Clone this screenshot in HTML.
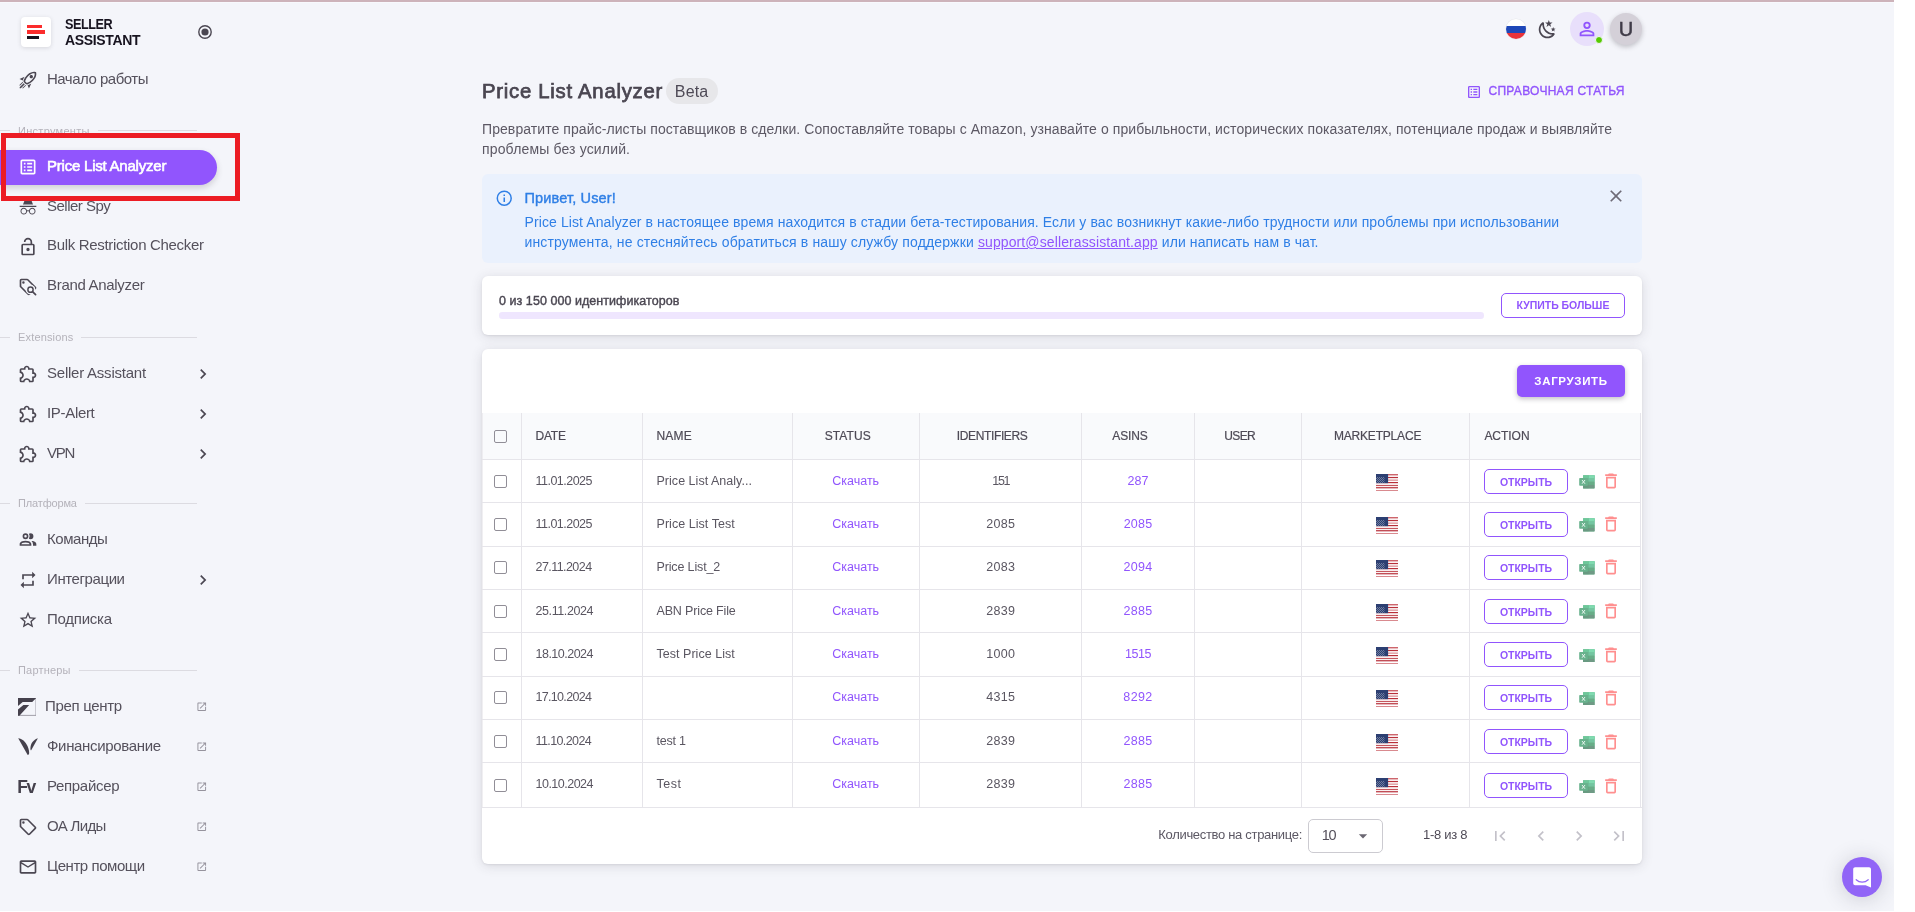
<!DOCTYPE html>
<html lang="ru">
<head>
<meta charset="utf-8">
<title>Price List Analyzer</title>
<style>
*{box-sizing:border-box;margin:0;padding:0}
html,body{width:1915px;height:912px;overflow:hidden;background:#fff}
body{font-family:"Liberation Sans",sans-serif;color:#524e59;position:relative}
#app{will-change:transform;position:absolute;left:0;top:0;width:1894px;height:911px;background:#f4f5fa;overflow:hidden}
#topbar{position:absolute;left:0;top:0;width:1894px;height:2px;background:#cdb3ba}
.abs{position:absolute}
svg{display:block}
/* ---------- sidebar ---------- */
#logo{position:absolute;left:21px;top:17px;width:30px;height:30px;background:#fff;border-radius:4px;box-shadow:0 1px 4px rgba(58,53,65,.16)}
#logo i{position:absolute;left:6px;height:3.4px;display:block}
#brand{position:absolute;left:65px;top:16px;font-weight:700;font-size:14px;line-height:16px;color:#17131f;letter-spacing:-.35px}
.nav{position:absolute;left:0;height:40px;width:240px}
.nav .ic{position:absolute;left:18px;top:11px;width:20px;height:20px}
.nav .tx{position:absolute;left:47px;top:0;line-height:40px;font-size:15px;color:#55515c;white-space:nowrap;letter-spacing:-.1px}
.nav .chev{position:absolute;left:192.8px;top:11.2px;width:20px;height:20px}
.nav .ext{position:absolute;left:196.2px;top:15.1px;width:11.5px;height:11.5px}
.sec{position:absolute;left:0;width:200px;height:14px}
.sec:before{content:"";position:absolute;left:0;top:7px;width:10px;height:1px;background:#dcdbe1}
.sec span{position:absolute;left:18px;top:0;font-size:11px;line-height:14px;color:#b4b2ba;background:#f4f5fa;padding-right:8px;z-index:1;letter-spacing:.1px}
.sec:after{content:"";position:absolute;left:18px;top:7px;width:179px;height:1px;background:#dcdbe1}
#active{position:absolute;left:0;top:150px;width:217px;height:35px;border-radius:0 18px 18px 0;background:#9155fd;box-shadow:0 3px 6px rgba(58,53,65,.2)}
#redbox{position:absolute;left:1px;top:133px;width:239px;height:68px;border:5px solid #ec1c24;z-index:5}

/* ---------- main ---------- */
.t{white-space:nowrap}
.card{background:#fff;border-radius:6px;box-shadow:0 2px 12px rgba(58,53,65,.15),0 1px 2px rgba(58,53,65,.09)}
.obtn{border:1px solid #9155fd;border-radius:5px;text-align:center;color:#9155fd;-webkit-text-stroke:.35px #9155fd;display:flex;align-items:center;justify-content:center}
.hl{height:1px;background:#e6e5ea}
.vl{width:1px;background:#e6e5ea}
.th{font-size:12px;line-height:20px;color:#4e4a56;-webkit-text-stroke:.2px #4e4a56}
.td{font-size:12.5px;line-height:20px;color:#5a5661}
.pu{color:#9155fd}
.ob{letter-spacing:0;font-weight:700;-webkit-text-stroke:0}
.cb{width:13.1px;height:13px;border:1.35px solid #918e97;border-radius:2px}
#n1{letter-spacing:-0.49px}
#n2{letter-spacing:-0.222px}
#n3{letter-spacing:-0.508px}
#n4{letter-spacing:-0.315px}
#n5{letter-spacing:-0.31px}
#n6{letter-spacing:-0.23px}
#n7{letter-spacing:-0.317px}
#n8{letter-spacing:-1.3px}
#n9{letter-spacing:-0.46px}
#n10{letter-spacing:-0.403px}
#n11{letter-spacing:-0.242px}
#n12{letter-spacing:-0.326px}
#n13{letter-spacing:-0.324px}
#n14{letter-spacing:-0.32px}
#n15{letter-spacing:-0.664px}
#n16{letter-spacing:-0.441px}
#br2{letter-spacing:-0.339px}
#s1{letter-spacing:0.281px}
#s2{letter-spacing:0.165px}
#s3{letter-spacing:-0.152px}
#s4{letter-spacing:0.178px}
#title{letter-spacing:0.743px}
#beta{letter-spacing:0.159px}
#helpart{letter-spacing:0.285px}
#desc1{letter-spacing:0.077px}
#desc2{letter-spacing:0.153px}
#al0{letter-spacing:0.154px}
#al1{letter-spacing:0.099px}
#al2a{letter-spacing:0.145px}
#al2b{letter-spacing:0.109px}
#al2c{letter-spacing:0.101px}
#cnt{letter-spacing:0.052px}
#buy{letter-spacing:-0.026px}
#upload{letter-spacing:0.654px}
#h1{letter-spacing:-0.208px}
#h2{letter-spacing:0.176px}
#h3{letter-spacing:0.067px}
#h4{letter-spacing:-0.367px}
#h5{letter-spacing:-0.129px}
#h6{letter-spacing:-0.615px}
#h7{letter-spacing:-0.186px}
#h8{letter-spacing:-0.029px}
#perpage{letter-spacing:-0.316px}
#ten{letter-spacing:-1.3px}
#range{letter-spacing:-0.296px}
#d0{letter-spacing:-0.516px}
#nm0{letter-spacing:0.025px}
#st0{letter-spacing:0.004px}
#id0{letter-spacing:-1.3px}
#as0{letter-spacing:0.07px}
#d1{letter-spacing:-0.516px}
#nm1{letter-spacing:0.044px}
#st1{letter-spacing:0.004px}
#id1{letter-spacing:0.362px}
#as1{letter-spacing:0.229px}
#d2{letter-spacing:-0.56px}
#nm2{letter-spacing:-0.138px}
#st2{letter-spacing:0.004px}
#id2{letter-spacing:0.362px}
#as2{letter-spacing:0.296px}
#d3{letter-spacing:-0.405px}
#nm3{letter-spacing:-0.152px}
#st3{letter-spacing:0.004px}
#id3{letter-spacing:0.362px}
#as3{letter-spacing:0.296px}
#d4{letter-spacing:-0.507px}
#nm4{letter-spacing:0.028px}
#st4{letter-spacing:0.004px}
#id4{letter-spacing:0.362px}
#as4{letter-spacing:-0.438px}
#d5{letter-spacing:-0.685px}
#st5{letter-spacing:0.004px}
#id5{letter-spacing:0.362px}
#as5{letter-spacing:0.362px}
#d6{letter-spacing:-0.605px}
#nm6{letter-spacing:-0.236px}
#st6{letter-spacing:0.004px}
#id6{letter-spacing:0.362px}
#as6{letter-spacing:0.296px}
#d7{letter-spacing:-0.507px}
#nm7{letter-spacing:0.487px}
#st7{letter-spacing:0.004px}
#id7{letter-spacing:0.362px}
#as7{letter-spacing:0.296px}
</style>
</head>
<body>
<div id="app">
<div id="topbar"></div><div class="abs" style="left:0;top:2px;width:1894px;height:1px;background:#f8f9fd"></div>
<svg width="0" height="0" style="position:absolute"><defs>
<pattern id="stars" width="2" height="2" patternUnits="userSpaceOnUse"><rect x=".1" y=".1" width=".8" height=".8" fill="#fff" opacity=".5"/><rect x="1.1" y="1.1" width=".8" height=".8" fill="#fff" opacity=".5"/></pattern>
<g id="usflag"><rect width="22" height="17.2" fill="#fff"/><rect y="0.17" width="22" height="1.2" fill="#c4474f"/><rect y="2.93" width="22" height="1.2" fill="#b8303a"/><rect y="5.54" width="22" height="1.2" fill="#d98a8f"/><rect y="8.00" width="22" height="1.2" fill="#b8303a"/><rect y="10.90" width="22" height="1.2" fill="#c4565d"/><rect y="13.16" width="22" height="1.2" fill="#b8303a"/><rect y="16.00" width="22" height="1.2" fill="#d98a8f"/><rect width="12.1" height="9.2" fill="#2c3f72"/><rect x="0" y="3" width="8.5" height="6.2" fill="url(#stars)"/></g>
<g id="xls"><rect x="4" y="1.2" width="11.6" height="13.2" rx=".7" fill="#6fb892"/><rect x="4" y="1.2" width="11.6" height="3.2" fill="#6ec79a"/><rect x="10" y="1.2" width="5.6" height="3.2" fill="#80dab0"/><rect x="4" y="4.4" width="11.6" height="3.3" fill="#74c5a1"/><rect x="4" y="7.7" width="11.6" height="3.3" fill="#68ad88"/><rect x="4" y="11" width="11.6" height="3.4" fill="#6f9a85"/><rect x="4" y="4.4" width="5.6" height="10" fill="#5c9b7a" opacity=".35"/><rect x=".2" y="4" width="8.7" height="7.8" rx=".8" fill="#69b28d"/><path d="M3 6L6 9.8M6 6L3 9.8" stroke="#fff" stroke-width=".95" opacity=".9"/></g>
</defs></svg>


<!-- SIDEBAR -->
<div id="logo"><i style="top:8px;width:15px;background:#fb2c2c"></i><i style="top:13.3px;width:18px;background:#fb2c2c"></i><i style="top:18.6px;width:12px;background:#17131f"></i></div>
<div id="brand"><span id="br1" style="display:inline-block;transform:scaleX(.905);transform-origin:0 50%;letter-spacing:-.5px!important">SELLER</span><br><span id="br2">ASSISTANT</span></div>
<svg class="abs" style="left:197px;top:24px" width="16" height="16" viewBox="0 0 16 16"><circle cx="8" cy="8" r="6.2" fill="none" stroke="#4b4752" stroke-width="1.4"/><circle cx="8" cy="8" r="3.6" fill="#4b4752"/></svg>

<div class="sec" style="top:123px"><span id="s1" style="top:.9px">Инструменты</span></div>
<div class="sec" style="top:330px"><span id="s2">Extensions</span></div>
<div class="sec" style="top:496px"><span id="s3">Платформа</span></div>
<div class="sec" style="top:663px"><span id="s4">Партнеры</span></div>
<div id="active"></div>
<div class="nav" style="top:59px"><svg class="ic" viewBox="0 0 24 24"><path fill="#4b4752" d="M13.13 22.19L11.5 18.36C13.07 17.78 14.54 17 15.9 16.09L13.13 22.19M5.64 12.5L1.81 10.87L7.91 8.1C7 9.46 6.22 10.93 5.64 12.5M19.22 4C19.5 4 19.75 4 19.96 4.05C20.13 5.44 19.94 8.3 16.66 11.58C14.96 13.29 12.93 14.6 10.65 15.47L8.5 13.37C9.42 11.06 10.73 9.03 12.42 7.34C15.18 4.58 17.64 4 19.22 4M19.22 2C17.24 2 14.24 2.69 11 5.93C8.81 8.12 7.5 10.53 6.65 12.64C6.37 13.39 6.56 14.21 7.11 14.77L9.24 16.89C9.62 17.27 10.13 17.5 10.66 17.5C10.89 17.5 11.13 17.44 11.36 17.35C13.5 16.53 15.88 15.19 18.07 13C23.73 7.34 21.61 2.39 21.61 2.39S20.7 2 19.22 2M14.54 9.46C13.76 8.68 13.76 7.41 14.54 6.63S16.59 5.85 17.37 6.63C18.14 7.41 18.15 8.68 17.37 9.46C16.59 10.24 15.32 10.24 14.54 9.46M6.24 22L9.88 18.36C9.54 18.27 9.21 18.12 8.91 17.91L4.83 22H6.24M2 22H3.41L8.18 17.24L6.76 15.83L2 20.59V22M2 19.17L6.09 15.09C5.88 14.79 5.73 14.47 5.64 14.12L2 17.76V19.17Z"/></svg><span class="tx" id="n1" style="top:-0.1px;">Начало работы</span></div>
<div class="nav" style="top:146px"><svg class="ic" viewBox="0 0 24 24"><path fill="#fff" d="M11 15H17V17H11V15M9 7H7V9H9V7M11 13H17V11H11V13M11 9H17V7H11V9M9 11H7V13H9V11M21 5V19C21 20.1 20.1 21 19 21H5C3.9 21 3 20.1 3 19V5C3 3.9 3.9 3 5 3H19C20.1 3 21 3.9 21 5M19 5H5V19H19V5M9 15H7V17H9V15Z"/></svg><span class="tx" id="n2" style="top:0.4px;color:#fff;-webkit-text-stroke:.6px #fff;">Price List Analyzer</span></div>
<div class="nav" style="top:186px"><svg class="ic" viewBox="0 0 24 24"><path fill="#4b4752" d="M17.06 13C15.2 13 13.64 14.33 13.24 16.1C12.29 15.69 11.42 15.8 10.76 16.09C10.35 14.31 8.79 13 6.94 13C4.77 13 3 14.79 3 17C3 19.21 4.77 21 6.94 21C9 21 10.68 19.38 10.84 17.32C11.18 17.08 12.07 16.63 13.16 17.34C13.34 19.39 15 21 17.06 21C19.23 21 21 19.21 21 17C21 14.79 19.23 13 17.06 13M6.94 19.86C5.38 19.86 4.13 18.58 4.13 17S5.39 14.14 6.94 14.14C8.5 14.14 9.75 15.42 9.75 17S8.5 19.86 6.94 19.86M17.06 19.86C15.5 19.86 14.25 18.58 14.25 17S15.5 14.14 17.06 14.14C18.62 14.14 19.88 15.42 19.88 17S18.61 19.86 17.06 19.86M22 10.5H2V12H22V10.5M15.53 2.63C15.31 2.14 14.75 1.88 14.22 2.05L12 2.79L9.77 2.05L9.72 2.04C9.19 1.89 8.63 2.17 8.43 2.68L6 9H18L15.56 2.68L15.53 2.63Z"/></svg><span class="tx" id="n3" style="top:0.4px;">Seller Spy</span></div>
<div class="nav" style="top:226px"><svg class="ic" viewBox="0 0 24 24"><path fill="#4b4752" d="M18,20V10H6V20H18M18,8A2,2 0 0,1 20,10V20A2,2 0 0,1 18,22H6C4.89,22 4,21.1 4,20V10A2,2 0 0,1 6,8H15V6A3,3 0 0,0 12,3A3,3 0 0,0 9,6H7A5,5 0 0,1 12,1A5,5 0 0,1 17,6V8H18M12,17A2,2 0 0,1 10,15A2,2 0 0,1 12,13A2,2 0 0,1 14,15A2,2 0 0,1 12,17Z"/></svg><span class="tx" id="n4" style="top:-0.6px;">Bulk Restriction Checker</span></div>
<div class="nav" style="top:266px"><svg class="ic" viewBox="0 0 24 24"><defs><mask id="tsm"><rect width="24" height="24" fill="#fff"/><circle cx="15" cy="15.2" r="5.8" fill="#000"/><path d="M15 15.2L23 23" stroke="#000" stroke-width="5"/></mask></defs><path mask="url(#tsm)" fill="#4b4752" d="M21.41 11.58L12.41 2.58A2 2 0 0 0 11 2H4A2 2 0 0 0 2 4V11A2 2 0 0 0 2.59 12.42L11.59 21.42A2 2 0 0 0 13 22A2 2 0 0 0 14.41 21.41L21.41 14.41A2 2 0 0 0 22 13A2 2 0 0 0 21.41 11.58M13 20L4 11V4H11L20 13M6.5 5A1.5 1.5 0 1 1 5 6.5A1.5 1.5 0 0 1 6.5 5Z"/><circle cx="15" cy="15.2" r="3.15" fill="none" stroke="#4b4752" stroke-width="1.75"/><path d="M17.4 17.6L21.1 21.2" stroke="#4b4752" stroke-width="2" stroke-linecap="round"/></svg><span class="tx" id="n5" style="top:-0.6px;">Brand Analyzer</span></div>
<div class="nav" style="top:353px"><svg class="ic" viewBox="0 0 24 24"><path fill="#4b4752" d="M22,13.5C22,15.26 20.7,16.72 19,16.96V20A2,2 0 0,1 17,22H13.2V21.7A2.7,2.7 0 0,0 10.5,19C9,19 7.8,20.21 7.8,21.7V22H4A2,2 0 0,1 2,20V16.2H2.3C3.79,16.2 5,15 5,13.5C5,12 3.79,10.8 2.3,10.8H2V7A2,2 0 0,1 4,5H7.04C7.28,3.3 8.74,2 10.5,2C12.26,2 13.72,3.3 13.96,5H17A2,2 0 0,1 19,7V10.04C20.7,10.28 22,11.74 22,13.5M17,15H18.5A1.5,1.5 0 0,0 20,13.5A1.5,1.5 0 0,0 18.5,12H17V7H12V5.5A1.5,1.5 0 0,0 10.5,4A1.5,1.5 0 0,0 9,5.5V7H4V9.12C5.76,9.8 7,11.5 7,13.5C7,15.5 5.75,17.2 4,17.88V20H6.12C6.8,18.25 8.5,17 10.5,17C12.5,17 14.2,18.25 14.88,20H17V15Z"/></svg><span class="tx" id="n6" style="top:-0.15px;">Seller Assistant</span><svg class="chev" viewBox="0 0 24 24"><path fill="#4b4752" d="M8.59,16.58L13.17,12L8.59,7.41L10,6L16,12L10,18L8.59,16.58Z"/></svg></div>
<div class="nav" style="top:393px"><svg class="ic" viewBox="0 0 24 24"><path fill="#4b4752" d="M22,13.5C22,15.26 20.7,16.72 19,16.96V20A2,2 0 0,1 17,22H13.2V21.7A2.7,2.7 0 0,0 10.5,19C9,19 7.8,20.21 7.8,21.7V22H4A2,2 0 0,1 2,20V16.2H2.3C3.79,16.2 5,15 5,13.5C5,12 3.79,10.8 2.3,10.8H2V7A2,2 0 0,1 4,5H7.04C7.28,3.3 8.74,2 10.5,2C12.26,2 13.72,3.3 13.96,5H17A2,2 0 0,1 19,7V10.04C20.7,10.28 22,11.74 22,13.5M17,15H18.5A1.5,1.5 0 0,0 20,13.5A1.5,1.5 0 0,0 18.5,12H17V7H12V5.5A1.5,1.5 0 0,0 10.5,4A1.5,1.5 0 0,0 9,5.5V7H4V9.12C5.76,9.8 7,11.5 7,13.5C7,15.5 5.75,17.2 4,17.88V20H6.12C6.8,18.25 8.5,17 10.5,17C12.5,17 14.2,18.25 14.88,20H17V15Z"/></svg><span class="tx" id="n7" style="top:-0.2px;">IP-Alert</span><svg class="chev" viewBox="0 0 24 24"><path fill="#4b4752" d="M8.59,16.58L13.17,12L8.59,7.41L10,6L16,12L10,18L8.59,16.58Z"/></svg></div>
<div class="nav" style="top:433px"><svg class="ic" viewBox="0 0 24 24"><path fill="#4b4752" d="M22,13.5C22,15.26 20.7,16.72 19,16.96V20A2,2 0 0,1 17,22H13.2V21.7A2.7,2.7 0 0,0 10.5,19C9,19 7.8,20.21 7.8,21.7V22H4A2,2 0 0,1 2,20V16.2H2.3C3.79,16.2 5,15 5,13.5C5,12 3.79,10.8 2.3,10.8H2V7A2,2 0 0,1 4,5H7.04C7.28,3.3 8.74,2 10.5,2C12.26,2 13.72,3.3 13.96,5H17A2,2 0 0,1 19,7V10.04C20.7,10.28 22,11.74 22,13.5M17,15H18.5A1.5,1.5 0 0,0 20,13.5A1.5,1.5 0 0,0 18.5,12H17V7H12V5.5A1.5,1.5 0 0,0 10.5,4A1.5,1.5 0 0,0 9,5.5V7H4V9.12C5.76,9.8 7,11.5 7,13.5C7,15.5 5.75,17.2 4,17.88V20H6.12C6.8,18.25 8.5,17 10.5,17C12.5,17 14.2,18.25 14.88,20H17V15Z"/></svg><span class="tx" id="n8" style="top:0px;">VPN</span><svg class="chev" viewBox="0 0 24 24"><path fill="#4b4752" d="M8.59,16.58L13.17,12L8.59,7.41L10,6L16,12L10,18L8.59,16.58Z"/></svg></div>
<div class="nav" style="top:519px"><svg class="ic" viewBox="0 0 24 24"><path fill="#4b4752" d="M13.07 10.41A5 5 0 0 0 13.07 4.59A3.39 3.39 0 0 1 15 4A3.5 3.5 0 0 1 15 11A3.39 3.39 0 0 1 13.07 10.41M5.5 7.5A3.5 3.5 0 1 1 9 11A3.5 3.5 0 0 1 5.5 7.5M7.5 7.5A1.5 1.5 0 1 0 9 6A1.5 1.5 0 0 0 7.5 7.5M16 17V19H2V17S2 13 9 13 16 17 16 17M14 17C13.86 16.22 12.67 15 9 15S4.07 16.31 4 17M15.95 13A5.32 5.32 0 0 1 18 17V19H22V17S22 13.37 15.94 13Z"/></svg><span class="tx" id="n9" style="top:-0.3px;">Команды</span></div>
<div class="nav" style="top:559px"><svg class="ic" viewBox="0 0 24 24"><path fill="#4b4752" d="M17,17H7V14L3,18L7,22V19H19V13H17M7,7H17V10L21,6L17,2V5H5V11H7V7Z"/></svg><span class="tx" id="n10" style="top:-0.2px;">Интеграции</span><svg class="chev" viewBox="0 0 24 24"><path fill="#4b4752" d="M8.59,16.58L13.17,12L8.59,7.41L10,6L16,12L10,18L8.59,16.58Z"/></svg></div>
<div class="nav" style="top:599px"><svg class="ic" viewBox="0 0 24 24"><path fill="#4b4752" d="M12,15.39L8.24,17.66L9.23,13.38L5.91,10.5L10.29,10.13L12,6.09L13.71,10.13L18.09,10.5L14.77,13.38L15.76,17.66M22,9.24L14.81,8.63L12,2L9.19,8.63L2,9.24L7.45,13.97L5.82,21L12,17.27L18.18,21L16.54,13.97L22,9.24Z"/></svg><span class="tx" id="n11" style="top:-0.1px;">Подписка</span></div>
<div class="nav" style="top:686px"><svg class="abs" style="left:18px;top:12px" width="18.4" height="17.8" viewBox="0 0 18.4 17.8"><path fill="none" stroke="#7f7c86" stroke-width=".7" d="M18 0V17.4H0"/><path fill="#45414c" d="M0 0H18.2L14.2 4H4.7L0 8ZM0 11.6L5.4 7H11.2L1.4 17.7H0Z"/></svg><span class="tx" id="n12" style="top:0.1px;left:45px;">Преп центр</span><svg class="ext" viewBox="0 0 24 24"><path fill="#96939d" d="M14,3V5H17.59L7.76,14.83L9.17,16.24L19,6.41V10H21V3M19,19H5V5H12V3H5C3.89,3 3,3.9 3,5V19A2,2 0 0,0 5,21H19A2,2 0 0,0 21,19V12H19V19Z"/></svg></div>
<div class="nav" style="top:726px"><svg class="abs" style="left:18px;top:12px" width="20" height="17.2" viewBox="0 0 20 17.2"><path fill="#45414c" d="M.2 .25C4 .6 7.5 3.5 9.5 8C11 11.5 11.5 14.5 11 16.3L9.7 17ZM19.9 .25C16 1.5 13.2 4.8 12.6 8.5C12.3 10.3 12.4 11.5 12.7 12.3L13.2 12.3Z"/></svg><span class="tx" id="n13" style="top:0px;">Финансирование</span><svg class="ext" viewBox="0 0 24 24"><path fill="#96939d" d="M14,3V5H17.59L7.76,14.83L9.17,16.24L19,6.41V10H21V3M19,19H5V5H12V3H5C3.89,3 3,3.9 3,5V19A2,2 0 0,0 5,21H19A2,2 0 0,0 21,19V12H19V19Z"/></svg></div>
<div class="nav" style="top:766px"><div class="abs" style="left:17.3px;top:9.6px;width:24px;height:22px;font-weight:700;font-size:17.5px;line-height:22px;color:#45414c;letter-spacing:-1.5px" id="fvtxt">Fv</div><span class="tx" id="n14" style="top:0.1px;">Репрайсер</span><svg class="ext" viewBox="0 0 24 24"><path fill="#96939d" d="M14,3V5H17.59L7.76,14.83L9.17,16.24L19,6.41V10H21V3M19,19H5V5H12V3H5C3.89,3 3,3.9 3,5V19A2,2 0 0,0 5,21H19A2,2 0 0,0 21,19V12H19V19Z"/></svg></div>
<div class="nav" style="top:806px"><svg class="ic" viewBox="0 0 24 24"><path fill="#4b4752" d="M21.41 11.58L12.41 2.58A2 2 0 0 0 11 2H4A2 2 0 0 0 2 4V11A2 2 0 0 0 2.59 12.42L11.59 21.42A2 2 0 0 0 13 22A2 2 0 0 0 14.41 21.41L21.41 14.41A2 2 0 0 0 22 13A2 2 0 0 0 21.41 11.58M13 20L4 11V4H11L20 13M6.5 5A1.5 1.5 0 1 1 5 6.5A1.5 1.5 0 0 1 6.5 5Z"/></svg><span class="tx" id="n15" style="top:0px;">ОА Лиды</span><svg class="ext" viewBox="0 0 24 24"><path fill="#96939d" d="M14,3V5H17.59L7.76,14.83L9.17,16.24L19,6.41V10H21V3M19,19H5V5H12V3H5C3.89,3 3,3.9 3,5V19A2,2 0 0,0 5,21H19A2,2 0 0,0 21,19V12H19V19Z"/></svg></div>
<div class="nav" style="top:846px"><svg class="ic" viewBox="0 0 24 24"><path fill="#4b4752" d="M22 6C22 4.9 21.1 4 20 4H4C2.9 4 2 4.9 2 6V18C2 19.1 2.9 20 4 20H20C21.1 20 22 19.1 22 18V6M20 6L12 11L4 6H20M20 18H4V8L12 13L20 8V18Z"/></svg><span class="tx" id="n16" style="top:-0.3px;">Центр помощи</span><svg class="ext" viewBox="0 0 24 24"><path fill="#96939d" d="M14,3V5H17.59L7.76,14.83L9.17,16.24L19,6.41V10H21V3M19,19H5V5H12V3H5C3.89,3 3,3.9 3,5V19A2,2 0 0,0 5,21H19A2,2 0 0,0 21,19V12H19V19Z"/></svg></div>
<div id="redbox"></div>

<!-- MAIN -->
<div class="abs" id="flagru" style="left:1505.7px;top:18.9px;width:20.5px;height:20.5px;border-radius:50%;overflow:hidden;background:#fff;box-shadow:0 0 0 .5px rgba(0,0,0,.06)"><i style="position:absolute;left:0;top:7px;width:21px;height:7px;background:#1e47b8"></i><i style="position:absolute;left:0;top:14px;width:21px;height:7px;background:#e8333a"></i></div>
<svg class="abs" style="left:1537px;top:18.5px;" width="21" height="21" viewBox="0 0 24 24"><path fill="#4b4752" d="M17.75,4.09L15.22,6.03L16.13,9.09L13.5,7.28L10.87,9.09L11.78,6.03L9.25,4.09L12.44,4L13.5,1L14.56,4L17.75,4.09M21.25,11L19.61,12.25L20.2,14.23L18.5,13.06L16.8,14.23L17.39,12.25L15.75,11L17.81,10.95L18.5,9L19.19,10.95L21.25,11M18.97,15.95C19.8,15.87 20.69,17.05 20.16,17.8C19.84,18.25 19.5,18.67 19.08,19.07C15.17,23 8.84,23 4.94,19.07C1.03,15.17 1.03,8.83 4.94,4.93C5.34,4.53 5.76,4.17 6.21,3.85C6.96,3.32 8.14,4.21 8.06,5.04C7.79,7.9 8.75,10.87 10.95,13.06C13.14,15.26 16.1,16.22 18.97,15.95M17.33,17.97C14.5,17.81 11.7,16.64 9.53,14.5C7.36,12.31 6.2,9.5 6.04,6.68C3.23,9.82 3.34,14.64 6.35,17.66C9.37,20.67 14.19,20.78 17.33,17.97Z"/></svg>
<div class="abs" style="left:1570px;top:11.5px;width:34px;height:34px;border-radius:50%;background:#e8dffb"></div>
<svg class="abs" style="left:1576px;top:17.5px;" width="22" height="22" viewBox="0 0 24 24"><path fill="#9155fd" d="M12,4A4,4 0 0,1 16,8A4,4 0 0,1 12,12A4,4 0 0,1 8,8A4,4 0 0,1 12,4M12,6A2,2 0 0,0 10,8A2,2 0 0,0 12,10A2,2 0 0,0 14,8A2,2 0 0,0 12,6M12,13C14.67,13 20,14.33 20,17V20H4V17C4,14.33 9.33,13 12,13M12,14.9C9.03,14.9 5.9,16.36 5.9,17V18.1H18.1V17C18.1,16.36 14.97,14.9 12,14.9Z"/></svg>
<div class="abs" style="left:1595px;top:36px;width:8px;height:8px;border-radius:50%;background:#56ca00;border:1px solid #f4f5fa"></div>
<div class="abs" id="uav" style="left:1610px;top:12.5px;width:32px;height:32px;border-radius:50%;background:#d4d0d8;box-shadow:0 2px 5px rgba(58,53,65,.28);text-align:center;line-height:32px;font-size:20px;color:#3f3b47;-webkit-text-stroke:.5px #3f3b47">U</div>
<div class="abs t" id="title" style="left:482px;top:76px;font-size:20.3px;line-height:30px;color:#4a4651;-webkit-text-stroke:.75px #4a4651">Price List Analyzer</div>
<div class="abs" style="left:666.1px;top:78px;width:52px;height:26px;border-radius:13px;background:#e7e7ea"></div>
<div class="abs t" id="beta" style="left:674.8px;top:79px;font-size:16px;line-height:26px;color:#4e4a56">Beta</div>
<svg class="abs" style="left:1465.5px;top:83.5px;" width="16" height="16" viewBox="0 0 24 24"><path fill="#9155fd" d="M11 15H17V17H11V15M9 7H7V9H9V7M11 13H17V11H11V13M11 9H17V7H11V9M9 11H7V13H9V11M21 5V19C21 20.1 20.1 21 19 21H5C3.9 21 3 20.1 3 19V5C3 3.9 3.9 3 5 3H19C20.1 3 21 3.9 21 5M19 5H5V19H19V5M9 15H7V17H9V15Z"/></svg>
<div class="abs t" id="helpart" style="left:1488.5px;top:81px;font-size:12px;line-height:20px;color:#9155fd;-webkit-text-stroke:.35px #9155fd">СПРАВОЧНАЯ СТАТЬЯ</div>
<div class="abs t" id="desc1" style="left:482px;top:119px;font-size:14px;line-height:20px;color:#5c5864">Превратите прайс-листы поставщиков в сделки. Сопоставляйте товары с Amazon, узнавайте о прибыльности, исторических показателях, потенциале продаж и выявляйте</div>
<div class="abs t" id="desc2" style="left:482px;top:139px;font-size:14px;line-height:20px;color:#5c5864">проблемы без усилий.</div>
<div class="abs" style="left:482px;top:174px;width:1160px;height:88.6px;border-radius:6px;background:#eaf1fd"></div>
<svg class="abs" style="left:494.5px;top:189.2px;" width="18.5" height="18.5" viewBox="0 0 24 24"><path fill="#2f7fe6" d="M11,9H13V7H11M12,20C7.59,20 4,16.41 4,12C4,7.59 7.59,4 12,4C16.41,4 20,7.59 20,12C20,16.41 16.41,20 12,20M12,2A10,10 0 0,0 2,12A10,10 0 0,0 12,22A10,10 0 0,0 22,12A10,10 0 0,0 12,2M11,17H13V11H11V17Z"/></svg>
<div class="abs t" id="al0" style="left:524.5px;top:188px;font-size:14.5px;line-height:20px;color:#2f7fe6;-webkit-text-stroke:.4px #2f7fe6">Привет, User!</div>
<div class="abs t" id="al1" style="left:524.5px;top:211.9px;font-size:14px;line-height:20px;color:#2f7fe6">Price List Analyzer в настоящее время находится в стадии бета-тестирования. Если у вас возникнут какие-либо трудности или проблемы при использовании</div>
<div class="abs t" id="al2" style="left:524.5px;top:231.9px;font-size:14px;line-height:20px;color:#2f7fe6"><span id="al2a">инструмента, не стесняйтесь обратиться в нашу службу поддержки </span><span id="al2b" style="color:#9155fd;text-decoration:underline">support@sellerassistant.app</span><span id="al2c"> или написать нам в чат.</span></div>
<svg class="abs" style="left:1606.3px;top:186.4px;" width="20" height="20" viewBox="0 0 24 24"><path fill="#6e6a76" d="M19,6.41L17.59,5L12,10.59L6.41,5L5,6.41L10.59,12L5,17.59L6.41,19L12,13.41L17.59,19L19,17.59L13.41,12L19,6.41Z"/></svg>
<div class="abs card" style="left:482px;top:276px;width:1160px;height:59px"></div>
<div class="abs t" id="cnt" style="left:499px;top:291px;font-size:12.5px;line-height:20px;color:#4a4651;-webkit-text-stroke:.4px #4a4651">0 из 150 000 идентификаторов</div>
<div class="abs" style="left:499px;top:312px;width:985px;height:6.5px;border-radius:3.25px;background:#efe6fe"></div>
<div class="abs obtn" style="left:1501px;top:293px;width:124px;height:25px"><span class="t" id="buy" style="font-size:10.5px;position:relative;top:-.6px;font-weight:700;-webkit-text-stroke:0">КУПИТЬ БОЛЬШЕ</span></div>
<div class="abs card" style="left:482px;top:349px;width:1160px;height:515px"></div>
<div class="abs" style="left:1517px;top:365px;width:108px;height:32px;border-radius:5px;background:#9155fd;box-shadow:0 2px 5px rgba(58,53,65,.3);text-align:center;line-height:32px;color:#fff;font-weight:700"><span class="t" id="upload" style="font-size:11.5px;position:relative;top:-.7px">ЗАГРУЗИТЬ</span></div>
<div class="abs" style="left:482px;top:413px;width:1158.5px;height:46px;background:#f9fafc"></div>
<div class="abs hl" style="left:482px;top:458.7px;width:1158.5px"></div>
<div class="abs hl" style="left:482px;top:501.9px;width:1158.5px"></div>
<div class="abs hl" style="left:482px;top:545.8px;width:1158.5px"></div>
<div class="abs hl" style="left:482px;top:588.8px;width:1158.5px"></div>
<div class="abs hl" style="left:482px;top:631.8px;width:1158.5px"></div>
<div class="abs hl" style="left:482px;top:675.8px;width:1158.5px"></div>
<div class="abs hl" style="left:482px;top:718.9px;width:1158.5px"></div>
<div class="abs hl" style="left:482px;top:761.9px;width:1158.5px"></div>
<div class="abs hl" style="left:482px;top:807.0px;width:1160px"></div>
<div class="abs vl" style="left:520.9px;top:413px;height:394.5px"></div>
<div class="abs vl" style="left:641.9px;top:413px;height:394.5px"></div>
<div class="abs vl" style="left:792.0px;top:413px;height:394.5px"></div>
<div class="abs vl" style="left:919.0px;top:413px;height:394.5px"></div>
<div class="abs vl" style="left:1080.5px;top:413px;height:394.5px"></div>
<div class="abs vl" style="left:1193.9px;top:413px;height:394.5px"></div>
<div class="abs vl" style="left:1300.8px;top:413px;height:394.5px"></div>
<div class="abs vl" style="left:1469.1px;top:413px;height:394.5px"></div>
<div class="abs vl" style="left:1639.9px;top:413px;height:394.5px"></div>
<div class="abs vl" style="left:481.6px;top:413px;height:394.5px;opacity:.6"></div>
<div class="abs t th" id="h1" style="left:535.5px;top:425.7px;">DATE</div>
<div class="abs t th" id="h2" style="left:656.5px;top:425.7px;">NAME</div>
<div class="abs t th" id="h3" style="left:824.8px;top:425.7px;">STATUS</div>
<div class="abs t th" id="h4" style="left:956.8px;top:425.7px;">IDENTIFIERS</div>
<div class="abs t th" id="h5" style="left:1112.3px;top:425.7px;">ASINS</div>
<div class="abs t th" id="h6" style="left:1224.2px;top:425.7px;">USER</div>
<div class="abs t th" id="h7" style="left:1333.9px;top:425.7px;">MARKETPLACE</div>
<div class="abs t th" id="h8" style="left:1484.4px;top:425.7px;">ACTION</div>
<div class="abs cb" style="left:494.1px;top:430.1px"></div>
<div class="abs cb" style="left:494.1px;top:475.1px"></div>
<div class="abs t td" id="d0" style="left:535.5px;top:471.4px">11.01.2025</div>
<div class="abs t td" id="nm0" style="left:656.5px;top:471.4px">Price List Analy...</div>
<div class="abs t td pu" id="st0" style="left:855.7px;top:471.4px;transform:translateX(-50%)">Скачать</div>
<div class="abs t td" id="id0" style="left:1000.8px;top:471.4px;transform:translateX(-50%)">151</div>
<div class="abs t td pu" id="as0" style="left:1138px;top:471.4px;transform:translateX(-50%)">287</div>
<svg class="abs" style="left:1375.8px;top:473.8px" width="22" height="17.2" viewBox="0 0 22 17.2"><use href="#usflag"/></svg>
<div class="abs obtn" style="left:1484px;top:469.0px;width:84px;height:24.6px"><span class="t ob" style="font-size:10.5px;position:relative;top:.8px">ОТКРЫТЬ</span></div>
<svg class="abs" style="left:1578.8px;top:474.4px" width="16" height="14.4" viewBox="0 0 16 14.4"><use href="#xls"/></svg>
<svg class="abs" style="left:1601.1px;top:471.4px;" width="20" height="20" viewBox="0 0 24 24"><path fill="#ff8f8f" d="M6,19A2,2 0 0,0 8,21H16A2,2 0 0,0 18,19V7H6V19M8,9H16V19H8V9M15.5,4L14.5,3H9.5L8.5,4H5V6H19V4H15.5Z"/></svg>
<div class="abs cb" style="left:494.1px;top:518.1px"></div>
<div class="abs t td" id="d1" style="left:535.5px;top:514.2px">11.01.2025</div>
<div class="abs t td" id="nm1" style="left:656.5px;top:514.2px">Price List Test</div>
<div class="abs t td pu" id="st1" style="left:855.7px;top:514.2px;transform:translateX(-50%)">Скачать</div>
<div class="abs t td" id="id1" style="left:1000.8px;top:514.2px;transform:translateX(-50%)">2085</div>
<div class="abs t td pu" id="as1" style="left:1138px;top:514.2px;transform:translateX(-50%)">2085</div>
<svg class="abs" style="left:1375.8px;top:516.8px" width="22" height="17.2" viewBox="0 0 22 17.2"><use href="#usflag"/></svg>
<div class="abs obtn" style="left:1484px;top:512.0px;width:84px;height:24.6px"><span class="t ob" style="font-size:10.5px;position:relative;top:.8px">ОТКРЫТЬ</span></div>
<svg class="abs" style="left:1578.8px;top:517.4px" width="16" height="14.4" viewBox="0 0 16 14.4"><use href="#xls"/></svg>
<svg class="abs" style="left:1601.1px;top:514.4px;" width="20" height="20" viewBox="0 0 24 24"><path fill="#ff8f8f" d="M6,19A2,2 0 0,0 8,21H16A2,2 0 0,0 18,19V7H6V19M8,9H16V19H8V9M15.5,4L14.5,3H9.5L8.5,4H5V6H19V4H15.5Z"/></svg>
<div class="abs cb" style="left:494.1px;top:561.1px"></div>
<div class="abs t td" id="d2" style="left:535.5px;top:557.2px">27.11.2024</div>
<div class="abs t td" id="nm2" style="left:656.5px;top:557.2px">Price List_2</div>
<div class="abs t td pu" id="st2" style="left:855.7px;top:557.2px;transform:translateX(-50%)">Скачать</div>
<div class="abs t td" id="id2" style="left:1000.8px;top:557.2px;transform:translateX(-50%)">2083</div>
<div class="abs t td pu" id="as2" style="left:1138px;top:557.2px;transform:translateX(-50%)">2094</div>
<svg class="abs" style="left:1375.8px;top:559.8px" width="22" height="17.2" viewBox="0 0 22 17.2"><use href="#usflag"/></svg>
<div class="abs obtn" style="left:1484px;top:555.0px;width:84px;height:24.6px"><span class="t ob" style="font-size:10.5px;position:relative;top:.8px">ОТКРЫТЬ</span></div>
<svg class="abs" style="left:1578.8px;top:560.4px" width="16" height="14.4" viewBox="0 0 16 14.4"><use href="#xls"/></svg>
<svg class="abs" style="left:1601.1px;top:557.4px;" width="20" height="20" viewBox="0 0 24 24"><path fill="#ff8f8f" d="M6,19A2,2 0 0,0 8,21H16A2,2 0 0,0 18,19V7H6V19M8,9H16V19H8V9M15.5,4L14.5,3H9.5L8.5,4H5V6H19V4H15.5Z"/></svg>
<div class="abs cb" style="left:494.1px;top:605.1px"></div>
<div class="abs t td" id="d3" style="left:535.5px;top:600.9px">25.11.2024</div>
<div class="abs t td" id="nm3" style="left:656.5px;top:600.9px">ABN Price File</div>
<div class="abs t td pu" id="st3" style="left:855.7px;top:600.9px;transform:translateX(-50%)">Скачать</div>
<div class="abs t td" id="id3" style="left:1000.8px;top:600.9px;transform:translateX(-50%)">2839</div>
<div class="abs t td pu" id="as3" style="left:1138px;top:600.9px;transform:translateX(-50%)">2885</div>
<svg class="abs" style="left:1375.8px;top:603.8px" width="22" height="17.2" viewBox="0 0 22 17.2"><use href="#usflag"/></svg>
<div class="abs obtn" style="left:1484px;top:599.0px;width:84px;height:24.6px"><span class="t ob" style="font-size:10.5px;position:relative;top:.8px">ОТКРЫТЬ</span></div>
<svg class="abs" style="left:1578.8px;top:604.4px" width="16" height="14.4" viewBox="0 0 16 14.4"><use href="#xls"/></svg>
<svg class="abs" style="left:1601.1px;top:601.4px;" width="20" height="20" viewBox="0 0 24 24"><path fill="#ff8f8f" d="M6,19A2,2 0 0,0 8,21H16A2,2 0 0,0 18,19V7H6V19M8,9H16V19H8V9M15.5,4L14.5,3H9.5L8.5,4H5V6H19V4H15.5Z"/></svg>
<div class="abs cb" style="left:494.1px;top:648.3px"></div>
<div class="abs t td" id="d4" style="left:535.5px;top:644.3px">18.10.2024</div>
<div class="abs t td" id="nm4" style="left:656.5px;top:644.3px">Test Price List</div>
<div class="abs t td pu" id="st4" style="left:855.7px;top:644.3px;transform:translateX(-50%)">Скачать</div>
<div class="abs t td" id="id4" style="left:1000.8px;top:644.3px;transform:translateX(-50%)">1000</div>
<div class="abs t td pu" id="as4" style="left:1138px;top:644.3px;transform:translateX(-50%)">1515</div>
<svg class="abs" style="left:1375.8px;top:647.0px" width="22" height="17.2" viewBox="0 0 22 17.2"><use href="#usflag"/></svg>
<div class="abs obtn" style="left:1484px;top:642.2px;width:84px;height:24.6px"><span class="t ob" style="font-size:10.5px;position:relative;top:.8px">ОТКРЫТЬ</span></div>
<svg class="abs" style="left:1578.8px;top:647.6px" width="16" height="14.4" viewBox="0 0 16 14.4"><use href="#xls"/></svg>
<svg class="abs" style="left:1601.1px;top:644.6px;" width="20" height="20" viewBox="0 0 24 24"><path fill="#ff8f8f" d="M6,19A2,2 0 0,0 8,21H16A2,2 0 0,0 18,19V7H6V19M8,9H16V19H8V9M15.5,4L14.5,3H9.5L8.5,4H5V6H19V4H15.5Z"/></svg>
<div class="abs cb" style="left:494.1px;top:691.3px"></div>
<div class="abs t td" id="d5" style="left:535.5px;top:687.1px">17.10.2024</div>
<div class="abs t td pu" id="st5" style="left:855.7px;top:687.1px;transform:translateX(-50%)">Скачать</div>
<div class="abs t td" id="id5" style="left:1000.8px;top:687.1px;transform:translateX(-50%)">4315</div>
<div class="abs t td pu" id="as5" style="left:1138px;top:687.1px;transform:translateX(-50%)">8292</div>
<svg class="abs" style="left:1375.8px;top:690.0px" width="22" height="17.2" viewBox="0 0 22 17.2"><use href="#usflag"/></svg>
<div class="abs obtn" style="left:1484px;top:685.2px;width:84px;height:24.6px"><span class="t ob" style="font-size:10.5px;position:relative;top:.8px">ОТКРЫТЬ</span></div>
<svg class="abs" style="left:1578.8px;top:690.6px" width="16" height="14.4" viewBox="0 0 16 14.4"><use href="#xls"/></svg>
<svg class="abs" style="left:1601.1px;top:687.6px;" width="20" height="20" viewBox="0 0 24 24"><path fill="#ff8f8f" d="M6,19A2,2 0 0,0 8,21H16A2,2 0 0,0 18,19V7H6V19M8,9H16V19H8V9M15.5,4L14.5,3H9.5L8.5,4H5V6H19V4H15.5Z"/></svg>
<div class="abs cb" style="left:494.1px;top:735.3px"></div>
<div class="abs t td" id="d6" style="left:535.5px;top:731.2px">11.10.2024</div>
<div class="abs t td" id="nm6" style="left:656.5px;top:731.2px">test 1</div>
<div class="abs t td pu" id="st6" style="left:855.7px;top:731.2px;transform:translateX(-50%)">Скачать</div>
<div class="abs t td" id="id6" style="left:1000.8px;top:731.2px;transform:translateX(-50%)">2839</div>
<div class="abs t td pu" id="as6" style="left:1138px;top:731.2px;transform:translateX(-50%)">2885</div>
<svg class="abs" style="left:1375.8px;top:734.0px" width="22" height="17.2" viewBox="0 0 22 17.2"><use href="#usflag"/></svg>
<div class="abs obtn" style="left:1484px;top:729.2px;width:84px;height:24.6px"><span class="t ob" style="font-size:10.5px;position:relative;top:.8px">ОТКРЫТЬ</span></div>
<svg class="abs" style="left:1578.8px;top:734.6px" width="16" height="14.4" viewBox="0 0 16 14.4"><use href="#xls"/></svg>
<svg class="abs" style="left:1601.1px;top:731.6px;" width="20" height="20" viewBox="0 0 24 24"><path fill="#ff8f8f" d="M6,19A2,2 0 0,0 8,21H16A2,2 0 0,0 18,19V7H6V19M8,9H16V19H8V9M15.5,4L14.5,3H9.5L8.5,4H5V6H19V4H15.5Z"/></svg>
<div class="abs cb" style="left:494.1px;top:779.3px"></div>
<div class="abs t td" id="d7" style="left:535.5px;top:774.2px">10.10.2024</div>
<div class="abs t td" id="nm7" style="left:656.5px;top:774.2px">Test</div>
<div class="abs t td pu" id="st7" style="left:855.7px;top:774.2px;transform:translateX(-50%)">Скачать</div>
<div class="abs t td" id="id7" style="left:1000.8px;top:774.2px;transform:translateX(-50%)">2839</div>
<div class="abs t td pu" id="as7" style="left:1138px;top:774.2px;transform:translateX(-50%)">2885</div>
<svg class="abs" style="left:1375.8px;top:778.0px" width="22" height="17.2" viewBox="0 0 22 17.2"><use href="#usflag"/></svg>
<div class="abs obtn" style="left:1484px;top:773.2px;width:84px;height:24.6px"><span class="t ob" style="font-size:10.5px;position:relative;top:.8px">ОТКРЫТЬ</span></div>
<svg class="abs" style="left:1578.8px;top:778.6px" width="16" height="14.4" viewBox="0 0 16 14.4"><use href="#xls"/></svg>
<svg class="abs" style="left:1601.1px;top:775.6px;" width="20" height="20" viewBox="0 0 24 24"><path fill="#ff8f8f" d="M6,19A2,2 0 0,0 8,21H16A2,2 0 0,0 18,19V7H6V19M8,9H16V19H8V9M15.5,4L14.5,3H9.5L8.5,4H5V6H19V4H15.5Z"/></svg>
<div class="abs t" id="perpage" style="left:1158.3px;top:825.3px;font-size:13px;line-height:20px;color:#5c5864">Количество на странице:</div>
<div class="abs" style="left:1308px;top:819.3px;width:74.6px;height:33.9px;border:1px solid #cccbd1;border-radius:5px"></div>
<div class="abs t" id="ten" style="left:1321.7px;top:825.1999999999999px;font-size:14.5px;line-height:20px;color:#55515c">10</div>
<svg class="abs" style="left:1353.4px;top:826.2px;" width="20" height="20" viewBox="0 0 24 24"><path fill="#6b6772" d="M7,10L12,15L17,10H7Z"/></svg>
<div class="abs t" id="range" style="left:1423px;top:825.3px;font-size:13px;line-height:20px;color:#4e4a56">1-8 из 8</div>
<svg class="abs" style="left:1489.8px;top:826.3px;" width="20" height="20" viewBox="0 0 24 24"><path fill="#c3c1c9" d="M18.41,16.59L13.82,12L18.41,7.41L17,6L11,12L17,18L18.41,16.59M6,6H8V18H6V6Z"/></svg>
<svg class="abs" style="left:1530.8px;top:826.3px;" width="20" height="20" viewBox="0 0 24 24"><path fill="#c3c1c9" d="M15.41,16.58L10.83,12L15.41,7.41L14,6L8,12L14,18L15.41,16.58Z"/></svg>
<svg class="abs" style="left:1568.5px;top:826.3px;" width="20" height="20" viewBox="0 0 24 24"><path fill="#c3c1c9" d="M8.59,16.58L13.17,12L8.59,7.41L10,6L16,12L10,18L8.59,16.58Z"/></svg>
<svg class="abs" style="left:1609.0px;top:826.3px;" width="20" height="20" viewBox="0 0 24 24"><path fill="#c3c1c9" d="M5.59,7.41L10.18,12L5.59,16.59L7,18L13,12L7,6L5.59,7.41M16,6H18V18H16V6Z"/></svg>
<div class="abs" style="left:1842px;top:857px;width:40px;height:40px;border-radius:50%;background:#9165f7;box-shadow:0 2px 22px rgba(40,40,60,.2)"></div>
<svg class="abs" style="left:1852.5px;top:866.5px" width="19" height="21" viewBox="0 0 19 21"><path fill="#fff" d="M2.2 0.3H16C17.2 0.3 18 1.1 18 2.3V20.6L12.6 18.3H2.2C1 18.3 0.2 17.5 0.2 16.3V2.3C0.2 1.1 1 0.3 2.2 0.3Z"/><path d="M3.2 12.7C6.5 15.9 11.8 15.9 15.2 12.7" fill="none" stroke="#9165f7" stroke-width="1.2" stroke-linecap="round"/></svg>

</div>
</body>
</html>
